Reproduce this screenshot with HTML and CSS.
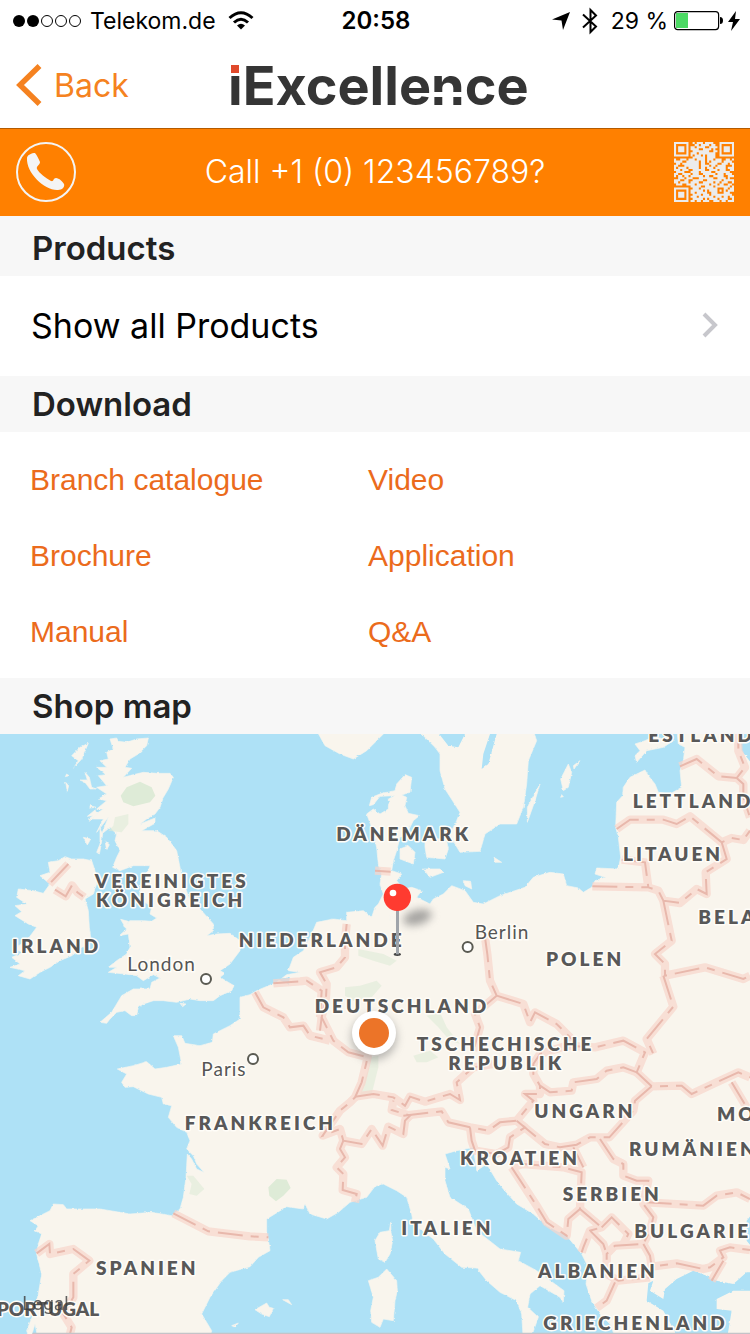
FILE: index.html
```html
<!DOCTYPE html>
<html lang="en">
<head>
<meta charset="utf-8">
<meta name="viewport" content="width=device-width, initial-scale=1">
<title>iExcellence</title>
<link rel="stylesheet" href="styles.css">
</head>
<body>
<div class="status">
  <div class="status-side">
    <svg class="dots" viewBox="0 0 70 14" aria-hidden="true"><g fill="#000"><circle cx="7" cy="7" r="6"/><circle cx="21" cy="7" r="6"/></g><g fill="none" stroke="#000"><circle cx="35" cy="7" r="5.5"/><circle cx="49" cy="7" r="5.5"/><circle cx="63" cy="7" r="5.5"/></g></svg>
    <span class="carrier">Telekom.de</span>
    <svg class="wifi" viewBox="0 0 26 20" aria-hidden="true"><g fill="none" stroke="#000" stroke-width="3"><path d="M1.500 7Q13-3.500 24.500 7"/><path d="M6 11.500Q13 5 20 11.500"/></g><path d="M9 14.500Q13 11 17 14.500L13 18.500Z"/></svg>
  </div>
  <time class="clock">20:58</time>
  <div class="status-side status-end">
    <svg class="locate" viewBox="0 0 18 18" aria-hidden="true"><path d="M18 0L11 18 9.500 8.500 0 7.500Z"/></svg>
    <svg class="bluetooth" viewBox="0 0 16 28" aria-hidden="true"><path d="M1 7.500L14 19.500 8.500 25V3L14 8.500 1 20.500" fill="none" stroke="#000" stroke-width="2"/></svg>
    <span class="percent">29 %</span>
    <svg class="battery" viewBox="0 0 50 20" aria-hidden="true"><rect x=".6" y=".6" width="44" height="18" rx="3" fill="#fff" stroke="#000" stroke-width="1.200"/><path d="M2 2H14V17H2Z" fill="#4cd964"/><path d="M46 6Q49 6 49 9.500T46 13Z"/></svg>
    <svg class="bolt" viewBox="0 0 12 20" aria-hidden="true"><path d="M8 0L0 11H5L3 20 12 8H7Z"/></svg>
  </div>
</div>
<header class="nav">
  <a class="back" href="#"><svg viewBox="0 0 26 42" aria-hidden="true"><path d="M23.500 2L4 21 23.500 40" fill="none" stroke="#f58220" stroke-width="5.500"/></svg>Back</a>
  <svg class="logo" viewBox="0 0 310 50" role="img" aria-label="iExcellence"><text class="logo-text" x="0" y="45">iExcellence</text><path d="M0 0H13V14H0Z" fill="#fff"/><path d="M3 5H11V13H3Z" fill="#e0492b"/><path d="M204 32H237V37H204Z" fill="#fff"/></svg>
</header>
<div class="callbar">
  <button class="icon-button" aria-label="Call"><svg viewBox="0 0 60 60" aria-hidden="true"><circle cx="30" cy="30" r="29" fill="none" stroke="#f4f4f4" stroke-width="2"/><path d="M11 16C11 13 16 11 19 11C21 13 23 18 24 20C24 23 20 24 21 27C23 31 30 36 35 39C38 40 37 36 40 36C43 36 47 40 48 42C49 45 46 48 42 48C29 49 10 31 11 16Z" fill="#f4f4f4"/></svg></button>
  <a class="call-text" href="tel:+10123456789">Call +1 (0) 123456789?</a>
  <button class="icon-button" aria-label="QR code"><svg id="qr" viewBox="0 0 29 29" aria-hidden="true"></svg></button>
</div>
<main>
  <h2 class="head head-first">Products</h2>
  <a class="row" href="#">Show all Products<svg class="chevron" viewBox="0 0 18 28" aria-hidden="true"><path d="M3 3L14 14 3 25" fill="none" stroke="#c7c7cc" stroke-width="4"/></svg></a>
  <h2 class="head">Download</h2>
  <nav class="links">
    <a href="#">Branch catalogue</a><a href="#">Video</a>
    <a href="#">Brochure</a><a href="#">Application</a>
    <a href="#">Manual</a><a href="#">Q&amp;A</a>
  </nav>
  <h2 class="head">Shop map</h2>
  <svg class="map" viewBox="0 0 2250 1800" role="img" aria-label="Shop map">
    <defs>
      <filter id="coast" x="0" y="0" width="100%" height="100%"><feTurbulence type="fractalNoise" baseFrequency="0.100" numOctaves="2" seed="4"/><feDisplacementMap in="SourceGraphic" scale="7" xChannelSelector="R" yChannelSelector="G"/></filter>
      <filter id="blur" x="-50%" y="-80%" width="200%" height="260%"><feGaussianBlur stdDeviation="12"/></filter>
      <g id="borders">
        <path d="M205,390L148,450M165,467L197,487 216,454 232,475 253,490"/>
        <path d="M1125,410L1172,413"/>
        <path d="M1040,570L1035,620 1035,670 1010,700 960,715 980,750 978,790 965,850 980,880 1000,920 1045,955 1103,970 1085,1045 1065,1090 1050,1105 1020,1130 968,1205 1020,1185 1030,1220 1085,1230 1115,1185 1148,1235 1165,1178 1210,1200 1215,1160 1230,1145 1175,1128 1180,1100"/>
        <path d="M820,748L900,742 920,740 965,770 960,850M765,775L790,820 850,850 870,880 910,875 930,905 990,920M965,850L960,890"/>
        <path d="M1065,1088L1120,1080 1180,1090 1215,1115 1230,1088 1275,1103 1350,1080 1380,1098 1370,1045 1420,1000 1480,990"/>
        <path d="M1210,1145L1325,1132 1345,1165 1410,1180 1465,1190 1500,1165 1550,1160 1600,1100 1575,1080 1620,1080 1620,1055 1600,1020 1600,990 1620,960 1700,935 1785,940 1870,920 1935,955 1910,1015 1870,1000 1820,1010 1790,1035 1720,1045 1715,1070 1650,1075 1620,1055"/>
        <path d="M1030,1220L1020,1245 1035,1270 1010,1300 1030,1320 1028,1368 1070,1380 1065,1405"/>
        <path d="M1410,1180L1415,1220 1425,1250 1490,1260 1525,1240 1530,1210 1575,1180 1550,1160 1635,1230 1680,1240 1730,1232 1770,1210 1828,1210 1900,1130 1905,1100 1955,1057 2045,1055 2075,1080 2150,1045 2215,1015 2250,1030M1910,1015L1955,1057"/>
        <path d="M1455,610L1462,660 1470,740 1490,785 1425,840 1440,880 1420,950M1490,785L1570,810 1590,865 1605,835 1670,870 1720,920"/>
        <path d="M2040,97L2090,75 2155,127 2210,132 2235,100 2215,50 2215,0M2210,132L2230,150 2230,190 2250,250M1850,285L1890,257 1990,257 2030,270 2070,247 2165,325 2195,312 2230,318 2250,290M2165,325L2180,375 2117,415 2120,480 2090,465 2040,507 1990,500 1975,470 1945,460 1935,385 1865,377M1777,457L1945,460M1990,500L2015,620 1965,660 1995,690 1995,725 2115,700 2230,735 2250,725M1990,725L2020,818 1940,915 1960,960"/>
        <path d="M2195,1045L2240,1120M1800,1215L1840,1275 1870,1290 1870,1325 1910,1340 1945,1340 1930,1410 1960,1450 1950,1490 1930,1530 1845,1535 1820,1560 1820,1620 1855,1640 1950,1630"/>
        <path d="M1940,1405L2110,1415 2150,1385 2210,1375 2250,1395M1930,1530L1950,1565 1955,1598 2030,1588 2110,1605 2130,1600 2170,1570 2160,1550 2190,1540 2250,1548M2170,1580L2135,1640M1845,1645L1820,1700 1790,1722"/>
        <path d="M1535,1300L1610,1415 1640,1465 1700,1505 1705,1455 1740,1425 1745,1315 1690,1300 1570,1290 1535,1300M1720,1240L1750,1300M1740,1425L1805,1480 1770,1490 1750,1540 1745,1555M1770,1490L1810,1530 1820,1560M1805,1480L1835,1450 1885,1500 1870,1530"/>
        <path d="M110,1558L148,1530 150,1560 220,1545 268,1580 220,1620 220,1690 190,1740 215,1780 210,1800M520,1438L625,1492 750,1507 805,1510"/>
      </g>
    </defs>
    <rect width="2250" height="1800" fill="#aee1f6"/>
    <g fill="#f9f5ed" stroke="#f4f4ee" stroke-width="2" filter="url(#coast)">
      <path d="M330,15L350,12 355,22 380,25 410,15 445,12 440,35 415,60 390,75 375,100 395,103 370,130 400,122 430,115 470,118 510,118 520,130 505,165 490,190 480,220 465,240 440,255 420,270 465,252 465,268 425,290 470,290 500,310 530,350 540,400 545,430 570,500 600,525 640,570 640,590 620,605 650,600 690,598 720,620 720,650 690,690 660,710 675,718 660,730 702,755 695,770 660,785 640,800 600,800 570,795 530,805 490,800 460,800 430,810 415,820 410,845 395,845 375,830 350,835 330,855 320,868 300,865 335,835 350,810 365,785 400,765 450,765 455,745 480,732 460,722 430,740 410,725 375,720 325,715 350,700 325,700 350,680 380,660 390,640 385,600 358,605 380,585 370,575 390,560 430,560 455,562 470,552 450,540 455,520 430,500 420,470 425,430 445,410 450,395 400,395 360,410 338,400 350,370 360,350 345,320 350,300 330,280 305,300 325,250 290,295 310,255 265,255 310,225 290,225 320,200 295,195 320,180 290,160 320,155 295,125 318,122 290,100 320,100 300,80 325,75 320,55 340,45Z"/>
      <path d="M195,368L215,375 250,375 275,380 285,410 290,450 280,480 255,495 265,530 268,580 272,610 250,640 215,665 180,680 150,700 120,715 90,735 55,725 75,710 30,700 60,690 35,670 70,655 40,645 80,620 110,580 85,570 45,545 65,533 45,515 80,510 50,490 55,465 100,470 130,478 150,450 120,425 150,415 145,385 175,380Z"/>
      <path d="M265,28L240,40 215,65 235,80 222,100 245,75ZM200,120L207,125 196,128ZM197,145L206,155 202,172ZM255,115L268,130 275,160 290,165 270,165 255,145 240,138 262,138ZM270,215L288,220 270,222ZM285,228L292,240 268,262 278,245 262,247ZM300,285L308,300 302,340 298,360 290,355 300,330ZM315,320L328,332 320,348ZM250,310L272,315 262,333ZM362,556L385,562 375,578ZM540,808L558,810 548,818Z"/>
      <path d="M2250,-20L2030,-20 2035,30 2055,40 2050,80 2040,110 2045,160 2010,180 1975,175 1965,150 1945,125 1935,108 1890,130 1870,160 1868,185 1850,205 1847,280 1855,310 1862,370 1855,405 1790,402 1785,420 1815,430 1785,440 1775,460 1750,475 1735,462 1700,455 1690,420 1650,415 1600,430 1575,460 1500,485 1450,510 1420,505 1395,470 1355,455 1330,480 1300,495 1290,510 1250,490 1265,470 1235,460 1210,465 1190,440 1205,420 1175,410 1180,380 1190,350 1200,310 1225,290 1240,260 1258,245 1225,238 1215,215 1220,190 1205,183 1230,175 1235,130 1215,122 1190,150 1185,170 1145,178 1115,190 1108,215 1120,212 1140,187 1185,185 1165,195 1165,225 1140,240 1120,225 1100,240 1115,280 1130,340 1135,390 1145,420 1140,450 1150,480 1135,510 1125,520 1115,550 1090,530 1040,535 1040,560 1000,555 950,565 935,600 910,650 880,670 865,710 900,715 860,722 830,745 770,770 750,782 720,790 720,855 690,875 640,900 637,925 600,935 555,928 545,905 520,905 535,940 545,990 500,1000 465,1005 440,983 400,995 352,1005 380,1020 365,1045 375,1060 400,1058 445,1080 485,1090 490,1110 515,1115 505,1150 530,1180 560,1195 570,1220 560,1245 580,1265 590,1290 612,1315 590,1305 575,1275 562,1260 558,1330 550,1390 540,1425 515,1445 455,1435 390,1440 300,1425 200,1425 190,1412 160,1410 150,1430 90,1460 115,1475 105,1490 125,1500 115,1530 110,1560 125,1620 115,1680 100,1740 80,1790 90,1820 105,1770 115,1820 630,1820 635,1790 605,1740 630,1690 665,1640 690,1615 750,1598 775,1570 810,1550 805,1515 800,1500 800,1455 860,1418 910,1425 915,1410 930,1440 980,1455 1015,1435 1050,1405 1100,1390 1125,1357 1150,1350 1190,1370 1220,1390 1235,1440 1240,1470 1300,1515 1335,1560 1385,1600 1430,1602 1460,1640 1500,1675 1550,1700 1565,1740 1570,1820 1590,1820 1615,1750 1583,1720 1590,1680 1620,1655 1680,1690 1690,1705 1692,1670 1610,1610 1555,1580 1562,1555 1500,1545 1430,1490 1405,1425 1350,1390 1335,1340 1335,1300 1350,1305 1335,1260 1370,1250 1420,1240 1430,1310 1460,1290 1490,1340 1510,1365 1550,1410 1600,1440 1640,1475 1700,1505 1745,1560 1765,1600 1758,1650 1775,1700 1800,1740 1830,1770 1850,1820 2270,1820 2270,-20Z"/>
      <path d="M950,-10L975,35 1020,60 1060,75 1100,50 1130,20 1160,-10ZM1255,-10L1305,40 1320,60 1320,110 1335,165 1380,235 1370,260 1350,300 1365,330 1380,355 1440,352 1455,300 1500,270 1550,270 1570,220 1580,150 1585,80 1610,20 1600,-10Z"/>
      <path d="M1705,90L1715,115 1705,160 1690,170 1682,135ZM1685,182L1690,188 1682,190ZM1620,150L1605,200 1582,265 1582,220ZM1740,80L1720,95 1722,105ZM1905,30L1935,20 1960,8 2020,20 1990,40 1940,50 1910,85 1905,65 1920,50ZM1275,290L1300,310 1340,320 1345,345 1335,375 1280,370 1275,340ZM1200,345L1225,335 1245,355 1240,390 1200,375ZM1270,405L1320,405 1330,415 1290,430ZM1390,440L1412,442 1415,465 1395,455ZM1482,370L1505,385 1485,385ZM1170,545L1180,550 1170,560Z"/>
      <path d="M1172,1465L1173,1495 1178,1520 1170,1560 1155,1585 1135,1575 1125,1520 1140,1495 1168,1490ZM1160,1605L1190,1640 1192,1670 1185,1700 1180,1760 1150,1755 1140,1780 1115,1765 1112,1730 1120,1690 1105,1640 1135,1630ZM765,1727L800,1707 808,1720 820,1723 808,1748 785,1740ZM848,1697L865,1697 875,1712ZM695,1775L715,1767 705,1780Z"/>
    </g>
    <g fill="#aee1f6" filter="url(#coast)">
      <path d="M1945,1648L1960,1640 1950,1670 1990,1695 1995,1665 2030,1635 2080,1610 2120,1625 2150,1640 2200,1650 2240,1615 2260,1615 2260,1670 2200,1670 2150,1695 2150,1725 2195,1730 2180,1820 2040,1820 1990,1730 1940,1700ZM2260,1435L2240,1460 2240,1520 2260,1545ZM1470,0L1490,0 1465,90 1445,105 1450,60ZM2220,0L2260,0 2260,95 2225,50ZM1310,-10L1400,-10 1375,40 1345,35 1325,10Z"/>
      <path d="M1145,205L1170,200 1160,220ZM830,735L870,730 865,750ZM1720,1730L1740,1780 1720,1760Z"/>
    </g>
    <g fill="#deebd7"><path d="M362,185L380,160 420,143 455,160 466,185 450,205 400,217 370,205ZM805,1360L830,1335 860,1337 872,1362 850,1385 828,1402 808,1385Z"/><g opacity=".6"><path d="M345,250L385,240 385,270 365,295 325,290 340,275ZM560,1325L580,1325 613,1365 590,1385 568,1380 575,1350ZM1115,970L1135,965 1135,1000 1115,1080 1080,1082 1100,1020ZM1035,760L1080,755 1130,740 1145,755 1115,790 1060,800 1035,785ZM1075,645L1150,660 1190,680 1170,695 1120,680 1075,665ZM1240,965L1290,950 1315,970 1280,985 1250,985ZM1280,845L1320,835 1340,880 1380,930 1350,920 1315,880Z"/></g></g>
    <use href="#borders" class="border-glow"/>
    <use href="#borders" class="border-line"/>
    <g class="countries">
      <text x="1945" y="25">ESTLAND</text><text x="1898" y="222">LETTLAND</text><text x="1869" y="380">LITAUEN</text><text x="2095" y="569">BELARUS</text>
      <text x="1009" y="322">DÄNEMARK</text><text x="284" y="461">VEREINIGTES</text><text x="288" y="518">KÖNIGREICH</text><text x="36" y="658">IRLAND</text>
      <text x="716" y="638">NIEDERLANDE</text><text x="1638" y="697">POLEN</text><text x="944" y="838">DEUTSCHLAND</text><text x="1250" y="950">TSCHECHISCHE</text><text x="1345" y="1007">REPUBLIK</text>
      <text x="554" y="1188">FRANKREICH</text><text x="1603" y="1152">UNGARN</text><text x="2151" y="1160">MOLDAU</text><text x="1380" y="1292">KROATIEN</text><text x="1887" y="1265">RUMÄNIEN</text>
      <text x="1688" y="1402">SERBIEN</text><text x="1204" y="1504">ITALIEN</text><text x="1903" y="1512">BULGARIEN</text><text x="288" y="1622">SPANIEN</text><text x="1614" y="1632">ALBANIEN</text><text x="1630" y="1787">GRIECHENLAND</text>
      <text class="tight" x="-10" y="1745">PORTUGAL</text>
    </g>
    <g class="cities"><text x="382" y="711">London</text><text x="1424" y="615">Berlin</text><text x="604" y="1027">Paris</text></g>
    <g fill="#fff" stroke="#5a5a52" stroke-width="6"><circle cx="618" cy="735" r="15"/><circle cx="1403" cy="639" r="15"/><circle cx="759" cy="975" r="15"/></g>
    <text class="legal" x="67" y="1729">Legal</text>
    <ellipse cx="1252" cy="550" rx="44" ry="22" fill="#777" opacity=".65" filter="url(#blur)" transform="rotate(-16 1252 550)"/>
    <ellipse cx="1192" cy="661" rx="11" ry="5" fill="#444"/>
    <path d="M1188 525H1197V661H1188Z" fill="#a0a4aa"/>
    <circle cx="1192" cy="490" r="41" fill="#ff3b30"/><circle cx="1179" cy="477" r="10" fill="#fff"/>
    <circle cx="1122" cy="910" r="68" fill="#777" opacity=".5" filter="url(#blur)"/>
    <circle cx="1122" cy="897" r="66" fill="#fff"/><circle cx="1122" cy="897" r="45" fill="#ec7428"/>
    <path d="M97 1798H2250" stroke="#c4c4c8" stroke-width="4"/>
  </svg>
</main>
<script src="app.js"></script>
</body>
</html>
```

FILE: styles.css
```css
* { box-sizing: border-box; }
body { margin: 0; background: #fff; color: #000; font-family: Inter, "Liberation Sans", sans-serif; }
a { color: inherit; text-decoration: none; }
svg { display: block; }

.status { display: grid; grid-template-columns: 1fr auto 1fr; align-items: center; height: 42px; padding: 0 10px 0 12px; font-size: 23px; line-height: 42px; }
.status-side { display: flex; align-items: center; }
.status-end { justify-content: flex-end; }
.dots { width: 70px; height: 14px; }
.carrier { margin: 0 12px 0 8px; }
.wifi { width: 26px; height: 20px; }
.clock { font-size: 24px; font-weight: 600; }
.locate { width: 18px; height: 18px; margin-right: 12px; }
.bluetooth { width: 16px; height: 28px; margin-right: 13px; }
.percent { margin-right: 6px; }
.battery { width: 50px; height: 20px; margin-right: 4px; }
.bolt { width: 12px; height: 20px; }

.nav { display: grid; grid-template-columns: 1fr auto 1fr; align-items: center; height: 86px; padding: 0 16px; }
.back { display: flex; align-items: center; gap: 12px; color: #f58220; font-size: 32px; }
.back svg { width: 26px; height: 42px; }
.logo { width: 310px; height: 50px; margin-left: 16px; }
.logo-text { fill: #353535; font: 700 54px Inter, sans-serif; }

.callbar { display: flex; align-items: center; justify-content: space-between; height: 88px; padding: 0 16px 2px; border-top: 1px solid #b35a00; background: #ff8000; color: #fff; }
.icon-button { width: 60px; height: 60px; padding: 0; border: 0; background: none; }
.icon-button svg { width: 100%; height: 100%; }
.call-text { font-size: 32px; font-weight: 300; }

.head { margin: 0; padding: 0 32px; background: #f7f7f7; color: #222; font-size: 33px; font-weight: 600; line-height: 56px; }
.head-first { padding-top: 4px; }
.row { display: flex; align-items: center; justify-content: space-between; min-height: 100px; padding: 0 31px 2px; font-size: 34px; }
.chevron { width: 18px; height: 28px; }
.links { display: grid; grid-template-columns: 1fr 1fr; padding: 10px 44px 8px 30px; color: #eb6b1c; font: 30px/76px "Liberation Sans", sans-serif; }

.map { width: 100%; height: auto; }
.border-glow { fill: none; stroke: #f8d6cc; stroke-width: 25px; stroke-linejoin: round; opacity: .7; }
.border-line { fill: none; stroke: #e8b8ac; stroke-width: 6px; stroke-dasharray: 75 24 24 24; }
.countries { fill: #585858; stroke: #fffdf8; stroke-width: 9px; stroke-linejoin: round; paint-order: stroke; font: 800 57px Lato, sans-serif; letter-spacing: 9px; }
.tight { letter-spacing: 0; }
.cities { fill: #555; stroke: #fffdf8; stroke-width: 9px; paint-order: stroke; font: 400 57px Lato, sans-serif; letter-spacing: 3px; }
.legal { fill: #3c3c3c; font: 400 54px Inter, sans-serif; opacity: .8; }
```

FILE: app.js
```js
const rows = [
  "11111110010111011110001111111",
  "10000010001101111011001000001",
  "10111010110111100111101011101",
  "10111010111100111101001011101",
  "10111010011111111001101011101",
  "10000010111011111111001000001",
  "11111110101110101111001111111",
  "00000000011111101111000000000",
  "10011101110111101110111001101",
  "11110011111101101011111011110",
  "01101111111101100111100111011",
  "11000111111101111011011110001",
  "10111101111101101110111110111",
  "11101110011111100111101110011",
  "01111000111101111100111111100",
  "11001111011100111111011101110",
  "10110110111111011001111100111",
  "00111011100011111110011110100",
  "11100110011111001111111011111",
  "11011110111100111110110111001",
  "01110011110111111011101100110",
  "00000000111110011110111111101",
  "11111110011101111111100011011",
  "10000010111111010111101010111",
  "10111010110111110011100011100",
  "10111010011110111011111111110",
  "10111010111011111110111011011",
  "10000010011111010111101111001",
  "11111110110110111001110110111"
];
const d = rows.map((row, y) => row.replace(/1+/g, (run, x) => `${"_"}${x},${run.length};`).match(/_\d+,\d+/g).map((m) => {
  const [x, w] = m.slice(1).split(",");
  return `M${x} ${y}h${w}v1h-${w}z`;
}).join("")).join("");
document.getElementById("qr").innerHTML = `<path fill="#ececec" d="${d}"/>`;
```
